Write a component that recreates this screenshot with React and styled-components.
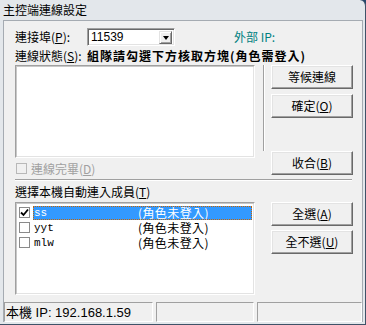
import React from 'react';
import styled, { createGlobalStyle } from 'styled-components';

const GlobalStyle = createGlobalStyle`
  html, body { margin:0; padding:0; background:#27476b; }
  body {
    font-family: "Noto Sans CJK TC", "Noto Sans", sans-serif;
    font-size:12px;
    color:#000;
  }
`;

const Window = styled.div`
  width:366px;
  height:325px;
  box-sizing:border-box;
  background:#e3e7eb;
  border-right:1px solid #3f5268;
  border-bottom:1px solid #3f5268;
  border-top-right-radius:6px;
  padding:0 2px 2px 3px;
  display:flex;
  flex-direction:column;
`;

const TitleBar = styled.div`
  height:20px;
  flex:none;
  display:flex;
  align-items:center;
  font-size:12px;
  line-height:14px;
`;

const Client = styled.div`
  flex:1;
  display:flex;
  flex-direction:column;
  background:#f0f0f0;
  border:1px solid #a5abb2;
  border-bottom:none;
`;

const Body = styled.div`
  padding:7px 9px 0 11px;
  display:flex;
  flex-direction:column;
`;

const Row = styled.div`
  display:flex;
  align-items:center;
  height:${p => p.$h || 14}px;
  margin-top:${p => p.$mt || 0}px;
  line-height:14px;
`;

const Label = styled.span`
  width:72px;
  flex:none;
  white-space:nowrap;
`;

const Combo = styled.div`
  width:88px;
  height:18px;
  box-sizing:border-box;
  background:#fff;
  border-top:1px solid #a0a0a0;
  border-left:1px solid #a0a0a0;
  border-right:1px solid #fff;
  border-bottom:1px solid #fff;
  box-shadow:inset 1px 1px 0 #696969, inset -1px -1px 0 #e3e3e3;
  display:flex;
  align-items:center;
  padding:0 2px 0 3px;
  font-family:"Liberation Sans", sans-serif;
  font-size:12px;
  line-height:14px;
`;

const ComboValue = styled.span`
  flex:1;
`;

const DropButton = styled.span`
  width:13px;
  height:13px;
  box-sizing:border-box;
  background:#f0f0f0;
  border-top:1px solid #e3e3e3;
  border-left:1px solid #e3e3e3;
  border-right:1px solid #696969;
  border-bottom:1px solid #696969;
  box-shadow:inset 1px 1px 0 #fff, inset -1px -1px 0 #a0a0a0;
  display:flex;
  align-items:center;
  justify-content:center;
  &::after {
    content:"";
    border-left:3.5px solid transparent;
    border-right:3.5px solid transparent;
    border-top:4px solid #000;
    margin-top:1px;
  }
`;

const ExtIp = styled.span`
  margin-left:59px;
  color:#008080;
`;

const Strong = styled.span`
  font-weight:700;
  white-space:nowrap;
  letter-spacing:1px;
  line-height:14px;
`;

const Section = styled.div`
  display:flex;
  height:${p => p.$h}px;
  margin-top:${p => p.$mt}px;
`;

const LeftCol = styled.div`
  width:240px;
  flex:none;
  display:flex;
  flex-direction:column;
`;

const Sunken = styled.div`
  height:${p => p.$h}px;
  box-sizing:border-box;
  background:#fff;
  border-top:1px solid #a0a0a0;
  border-left:1px solid #a0a0a0;
  border-right:1px solid #fff;
  border-bottom:1px solid #fff;
  box-shadow:inset 1px 1px 0 #c8c8c8, inset -1px -1px 0 #e3e3e3;
`;

const VLine = styled.div`
  width:0;
  height:86px;
  margin:0 6px 0 8px;
  border-left:1px solid #a0a0a0;
  border-right:1px solid #fff;
`;

const ButtonCol = styled.div`
  width:82px;
  flex:none;
  margin-left:${p => p.$ml || 0}px;
  display:flex;
  flex-direction:column;
  gap:${p => p.$gap}px;
`;

const Button = styled.button`
  width:82px;
  height:24px;
  flex:none;
  padding:0;
  margin-top:${p => (p.$bottom ? 'auto' : '0')};
  box-sizing:border-box;
  background:#f0f0f0;
  font-family:"Noto Sans CJK TC", sans-serif;
  font-size:12px;
  line-height:14px;
  color:#000;
  border-top:1px solid #fff;
  border-left:1px solid #fff;
  border-right:1px solid #696969;
  border-bottom:1px solid #696969;
  box-shadow:inset -1px -1px 0 #a0a0a0, inset 1px 1px 0 #e3e3e3;
`;

const CheckRow = styled.div`
  margin-top:4px;
  height:13px;
  display:flex;
  align-items:center;
  line-height:14px;
  color:${p => (p.$disabled ? '#a0a0a0' : '#000')};
`;

const Box = styled.span`
  width:11px;
  height:11px;
  flex:none;
  box-sizing:border-box;
  border:1px solid ${p => (p.$disabled ? '#b8b8b8' : '#8a8a8a')};
  background:${p => (p.$disabled ? '#f0f0f0' : '#fff')};
  margin:0 ${p => p.$mr || 4}px 0 1px;
  display:flex;
  align-items:center;
  justify-content:center;
`;

const HLine = styled.div`
  width:337px;
  margin-top:4px;
  border-top:1px solid #a0a0a0;
  border-bottom:1px solid #fff;
`;

const List = styled(Sunken)`
  display:flex;
  flex-direction:column;
  padding:2px 2px 0 2px;
`;

const ListRow = styled.div`
  display:flex;
  align-items:center;
  height:15px;
  line-height:14px;
`;

const RowText = styled.div`
  flex:1;
  height:14px;
  display:flex;
  align-items:center;
  padding-left:1px;
  box-sizing:border-box;
  line-height:14px;
  background:${p => (p.$selected ? '#3399ff' : 'transparent')};
  color:${p => (p.$selected ? '#fff' : '#000')};
  outline:${p => (p.$selected ? '1px dotted #c86400' : 'none')};
  outline-offset:-1px;
`;

const Name = styled.span`
  width:104px;
  flex:none;
  font-family:"Liberation Mono", monospace;
  font-size:11px;
`;

const Note = styled.span`
  letter-spacing:0.4px;
  white-space:nowrap;
`;

const StatusBar = styled.div`
  margin-top:auto;
  height:20px;
  display:flex;
  gap:3px;
`;

const Panel = styled.div`
  width:${p => (p.$w ? `${p.$w}px` : 'auto')};
  flex:${p => (p.$w ? 'none' : '1')};
  box-sizing:border-box;
  border-top:1px solid #a0a0a0;
  border-left:1px solid #a0a0a0;
  border-right:1px solid #fff;
  border-bottom:1px solid #fff;
  display:flex;
  align-items:center;
  padding-left:1px;
  font-family:"Liberation Sans", "Noto Sans CJK TC", sans-serif;
  font-size:13px;
  line-height:15px;
  white-space:nowrap;
`;

const Check = () => (
  <svg width="9" height="9" viewBox="0 0 9 9">
    <path d="M1 4.5 L3.5 7 L8 1.5" fill="none" stroke="#000" strokeWidth="1.8" />
  </svg>
);

const members = [
  { name: 'ss', checked: true },
  { name: 'yyt', checked: false },
  { name: 'mlw', checked: false },
];

export default function App() {
  return (
    <>
      <GlobalStyle />
      <Window>
        <TitleBar>主控端連線設定</TitleBar>
        <Client>
          <Body>
            <Row $h={18}>
              <Label>連接埠(<u>P</u>):</Label>
              <Combo>
                <ComboValue>11539</ComboValue>
                <DropButton />
              </Combo>
              <ExtIp>外部 IP:</ExtIp>
            </Row>
            <Row $mt={3}>
              <Label>連線狀態(<u>S</u>):</Label>
              <Strong>組隊請勾選下方核取方塊(角色需登入)</Strong>
            </Row>
            <Section $h={110} $mt={2}>
              <LeftCol>
                <Sunken $h={93} />
                <CheckRow $disabled>
                  <Box $disabled />
                  連線完畢(<u>D</u>)
                </CheckRow>
              </LeftCol>
              <VLine />
              <ButtonCol $gap={5}>
                <Button>等候連線</Button>
                <Button>確定(<u>O</u>)</Button>
                <Button $bottom>收合(<u>B</u>)</Button>
              </ButtonCol>
            </Section>
            <HLine />
            <Row $mt={4}>選擇本機自動連入成員(<u>T</u>)</Row>
            <Section $h={93} $mt={3}>
              <LeftCol>
                <List $h={93}>
                  {members.map(m => (
                    <ListRow key={m.name}>
                      <Box $mr={3}>{m.checked && <Check />}</Box>
                      <RowText $selected={m.checked}>
                        <Name>{m.name}</Name>
                        <Note>(角色未登入)</Note>
                      </RowText>
                    </ListRow>
                  ))}
                </List>
              </LeftCol>
              <ButtonCol $ml={16} $gap={4}>
                <Button>全選(<u>A</u>)</Button>
                <Button>全不選(<u>U</u>)</Button>
              </ButtonCol>
            </Section>
          </Body>
          <StatusBar>
            <Panel $w={149}>本機 IP: 192.168.1.59</Panel>
            <Panel $w={98} />
            <Panel />
          </StatusBar>
        </Client>
      </Window>
    </>
  );
}
